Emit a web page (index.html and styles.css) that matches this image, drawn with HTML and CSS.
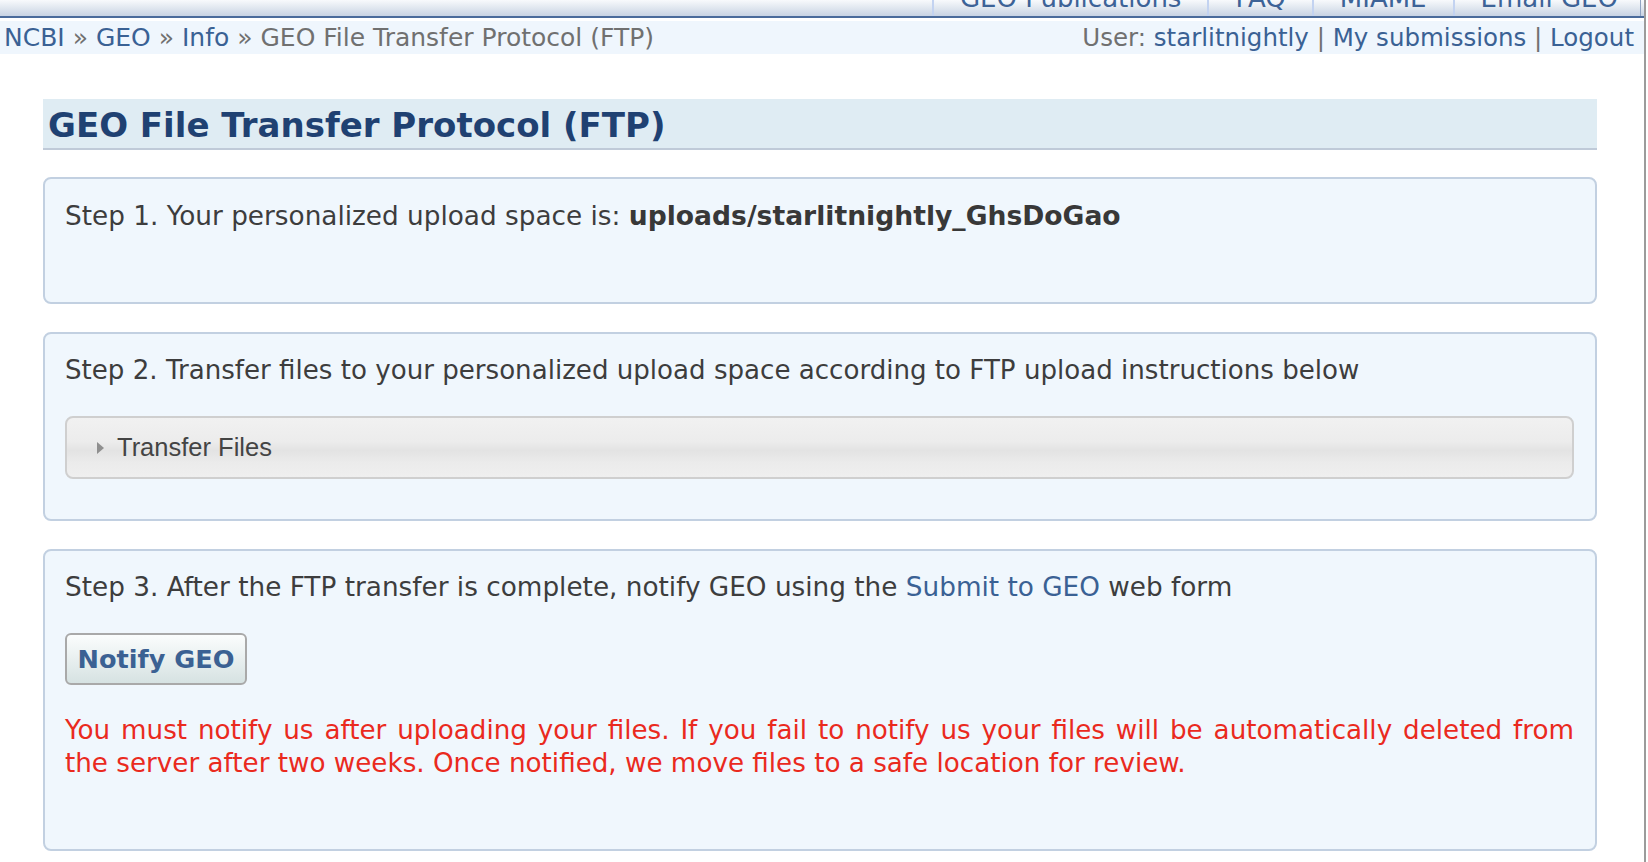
FILE: index.html
```html
<!DOCTYPE html>
<html lang="en">
<head>
<meta charset="utf-8">
<title>GEO File Transfer Protocol (FTP)</title>
<link rel="stylesheet" href="styles.css">
</head>
<body>
<div class="page">
  <div class="topbar">
    <nav class="tabs">
      <a class="tab" href="#">GEO Publications</a>
      <a class="tab" href="#">FAQ</a>
      <a class="tab" href="#">MIAME</a>
      <a class="tab" href="#">Email GEO</a>
    </nav>
  </div>
  <div class="crumbs">
    <div class="crumb-left">
      <a href="#">NCBI</a> <span class="sep">&raquo;</span> <a href="#">GEO</a> <span class="sep">&raquo;</span> <a href="#">Info</a> <span class="sep">&raquo;</span> <span class="current">GEO File Transfer Protocol (FTP)</span>
    </div>
    <div class="crumb-right">
      <span class="current">User:</span> <a href="#">starlitnightly</a> <span class="sep">|</span> <a href="#">My submissions</a> <span class="sep">|</span> <a href="#">Logout</a>
    </div>
  </div>
  <main class="content">
    <h1 class="title">GEO File Transfer Protocol (FTP)</h1>
    <section class="step">
      <p class="step-text">Step 1. Your personalized upload space is: <b>uploads/starlitnightly_GhsDoGao</b></p>
    </section>
    <section class="step">
      <p class="step-text step-two">Step 2. Transfer files to your personalized upload space according to FTP upload instructions below</p>
      <div class="disclosure"><span class="tri"></span><span class="disc-label">Transfer Files</span></div>
    </section>
    <section class="step">
      <p class="step-text">Step 3. After the FTP transfer is complete, notify GEO using the <a href="#">Submit to GEO</a> web form</p>
      <div class="btn-row"><button class="notify" type="button">Notify GEO</button></div>
      <p class="warn"><span class="warn-line">You must notify us after uploading your files. If you fail to notify us your files will be automatically deleted from</span> the server after two weeks. Once notified, we move files to a safe location for review.</p>
    </section>
  </main>
</div>
</body>
</html>
```
FILE: styles.css
```css
html, body {
  margin: 0;
  padding: 0;
  background: #ffffff;
}
body {
  font-family: "DejaVu Sans", Verdana, sans-serif;
  color: #3d3d3d;
  overflow: hidden;
}
a {
  color: #3a6194;
  text-decoration: none;
}
.page {
  width: 1644px;
  min-height: 862px;
  border-right: 2px solid #9b9b9b;
  box-sizing: content-box;
}
.topbar {
  height: 16px;
  background: linear-gradient(#f8fafc, #c8d3e3);
  border-bottom: 2px solid #4a6b9b;
  overflow: hidden;
  display: flex;
  justify-content: flex-end;
  padding-right: 3px;
}
.tabs {
  display: flex;
  height: 16px;
}
.tab {
  display: block;
  font-size: 26px;
  line-height: 20px;
  height: 28px;
  margin-top: -12px;
  padding: 0 26px;
  border-left: 2px solid #c3d3f1;
  color: #3d6397;
  white-space: nowrap;
}
.tab:last-child {
  border-right: 1px solid #8fa3c2;
  padding-right: 22px;
}
.crumbs {
  margin-top: 3px;
  height: 33px;
  background: #eff6fd;
  display: flex;
  justify-content: space-between;
  align-items: center;
  padding: 0 10px 0 4px;
  font-size: 25px;
  line-height: 33px;
  white-space: nowrap;
}
.crumb-right {
  font-size: 24.5px;
}
.sep, .current {
  color: #707070;
}
.content {
  margin: 45px 47px 0 43px;
}
.title {
  margin: 0 0 27px 0;
  box-sizing: content-box;
  display: flex;
  align-items: center;
  padding: 3px 0 0 5px;
  height: 46px;
  background: #dfecf3;
  border-bottom: 2px solid #bfcad8;
  font-size: 34px;
  font-weight: bold;
  color: #1f4172;
  white-space: nowrap;
}
.step {
  background: #f0f7fd;
  border: 2px solid #c2d0e1;
  border-radius: 8px;
  padding: 20px 21px 40px 20px;
  margin-bottom: 28px;
}
.step-text {
  margin: 0 0 29px 0;
  font-size: 26.3px;
  line-height: 33px;
  white-space: nowrap;
}
.step-two {
  font-size: 26.1px;
}
.step-text b {
  color: #383838;
  font-size: 26.6px;
}
.disclosure {
  height: 59px;
  border: 2px solid #cfcfcf;
  border-radius: 8px;
  background: linear-gradient(#f1f1f1 0%, #ececec 40%, #e3e3e3 55%, #ebebeb 75%, #efefef 100%);
  display: flex;
  align-items: center;
  padding-left: 30px;
}
.tri {
  width: 0;
  height: 0;
  border-top: 6px solid transparent;
  border-bottom: 6px solid transparent;
  border-left: 7px solid #8f8f8f;
  margin-right: 13px;
}
.disc-label {
  font-family: "Liberation Sans", Arial, sans-serif;
  font-size: 25.5px;
  color: #444444;
}
.btn-row {
  margin-bottom: 29px;
  display: flex;
}
.notify {
  width: 182px;
  height: 52px;
  border: 2px solid #a9a9a9;
  border-radius: 6px;
  background: linear-gradient(#fbfdfd, #d6e2e2);
  font-family: "DejaVu Sans", Verdana, sans-serif;
  font-weight: bold;
  font-size: 25.6px;
  color: #3b6193;
  padding: 0;
}
.warn {
  margin: 0 0 29px 0;
  font-size: 26.2px;
  line-height: 33px;
  color: #ea2a1e;
  text-align: justify;
}
.warn-line {
  display: block;
  text-align-last: justify;
}
```
